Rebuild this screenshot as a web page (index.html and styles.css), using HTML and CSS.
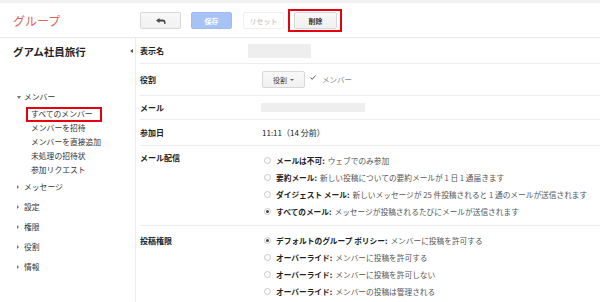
FILE: index.html
```html
<!DOCTYPE html>
<html lang="ja">
<head>
<meta charset="utf-8">
<title>グループ</title>
<link rel="stylesheet" href="styles.css">
</head>
<body>
<div class="topstrip"></div>
<header class="header">
  <div class="brand">グループ</div>
  <div class="toolbar">
    <button class="btn btn-back" type="button" aria-label="戻る">
      <svg width="10" height="6" viewBox="0 0 10 6"><path d="M0 2.5 L3.5 0 V1.6 H6.5 Q9.5 1.6 9.5 4.6 V6 H8.2 V4.8 Q8.2 3.4 6.5 3.4 H3.5 V5 Z" fill="#444"/></svg>
    </button>
    <button class="btn btn-save" type="button">保存</button>
    <button class="btn btn-reset" type="button">リセット</button>
    <button class="btn btn-delete marked" type="button">削除</button>
  </div>
</header>
<div class="layout">
  <aside class="sidebar">
    <div class="group-title">
      <span>グアム社員旅行</span>
      <span class="collapse"></span>
    </div>
    <ul class="nav">
      <li class="nav-top open"><span class="arrow down"></span>メンバー</li>
      <li class="nav-sub"><span class="marked">すべてのメンバー</span></li>
      <li class="nav-sub">メンバーを招待</li>
      <li class="nav-sub">メンバーを直接追加</li>
      <li class="nav-sub">未処理の招待状</li>
      <li class="nav-sub">参加リクエスト</li>
      <li class="nav-top"><span class="arrow right"></span>メッセージ</li>
      <li class="nav-top"><span class="arrow right"></span>設定</li>
      <li class="nav-top"><span class="arrow right"></span>権限</li>
      <li class="nav-top"><span class="arrow right"></span>役割</li>
      <li class="nav-top"><span class="arrow right"></span>情報</li>
    </ul>
  </aside>
  <main class="main">
    <div class="row row-name">
      <div class="label">表示名</div>
      <div class="value"><span class="redact redact-name"></span></div>
    </div>
    <div class="row row-role">
      <div class="label">役割</div>
      <div class="value">
        <button class="btn btn-role" type="button">役割 <span class="caret"></span></button>
        <svg class="check" width="6" height="5" viewBox="0 0 6 5"><path d="M0.5 2.6 L2.2 4.3 L5.5 0.6" fill="none" stroke="#555" stroke-width="1"/></svg>
        <span class="role-name">メンバー</span>
      </div>
    </div>
    <div class="row row-mail">
      <div class="label">メール</div>
      <div class="value"><span class="redact redact-mail"></span></div>
    </div>
    <div class="row row-joined">
      <div class="label">参加日</div>
      <div class="value">11:11（14 分前）</div>
    </div>
    <div class="row row-options">
      <div class="label">メール配信</div>
      <div class="value options">
        <div class="opt"><span class="radio"></span><b>メールは不可:</b> ウェブでのみ参加</div>
        <div class="opt"><span class="radio"></span><b>要約メール:</b> 新しい投稿についての要約メールが 1 日 1 通届きます</div>
        <div class="opt"><span class="radio"></span><b>ダイジェスト メール:</b> 新しいメッセージが 25 件投稿されると 1 通のメールが送信されます</div>
        <div class="opt"><span class="radio on"></span><b>すべてのメール:</b> メッセージが投稿されるたびにメールが送信されます</div>
      </div>
    </div>
    <div class="row row-options last">
      <div class="label">投稿権限</div>
      <div class="value options">
        <div class="opt"><span class="radio on"></span><b>デフォルトのグループ ポリシー:</b> メンバーに投稿を許可する</div>
        <div class="opt"><span class="radio"></span><b>オーバーライド:</b> メンバーに投稿を許可する</div>
        <div class="opt"><span class="radio"></span><b>オーバーライド:</b> メンバーに投稿を許可しない</div>
        <div class="opt"><span class="radio"></span><b>オーバーライド:</b> メンバーの投稿は管理される</div>
      </div>
    </div>
  </main>
</div>
</body>
</html>
```
FILE: styles.css
```css
* { box-sizing: border-box; }
html, body { margin: 0; padding: 0; }
body {
  width: 600px;
  height: 302px;
  overflow: hidden;
  background: #fff;
  color: #222;
  font-family: "Liberation Sans", "Noto Sans CJK JP", sans-serif;
  font-size: 8px;
}
.topstrip { height: 3px; background: #f1f1f1; }
.header {
  height: 35px;
  border-bottom: 1px solid #e8e8e8;
  display: flex;
  align-items: center;
}
.brand {
  width: 140px;
  padding-left: 13px;
  font-size: 12px;
  color: #e6615a;
  font-family: "Noto Sans CJK JP", sans-serif;
}
.toolbar { display: flex; align-items: center; gap: 10px; padding-top: 1px; }
.btn {
  height: 17px;
  width: 41px;
  padding: 0;
  border: 1px solid #d8d8d8;
  border-radius: 2px;
  background: linear-gradient(#f8f8f8, #f1f1f1);
  font-family: "Noto Sans CJK JP", sans-serif;
  font-size: 7px;
  font-weight: bold;
  color: #333;
  display: inline-flex;
  align-items: center;
  justify-content: center;
  position: relative;
}
.btn-save { background: #a7c3f6; border-color: #a0bcf0; color: #fff; }
.btn-reset { background: #fff; border-color: #efefef; color: #d0d0d0; margin-left: 1px; }
.btn-delete { width: 43px; }
.marked { position: relative; }
.btn-delete.marked::after {
  content: "";
  position: absolute;
  left: -7px; right: -6px; top: -4px; bottom: -4px;
  border: 2px solid #e8000f;
}
.layout { display: flex; }
.sidebar {
  width: 136px;
  border-right: 1px solid #ececec;
  height: 264px;
  flex: none;
}
.group-title {
  height: 26px;
  display: flex;
  align-items: center;
  justify-content: space-between;
  padding-left: 13px;
  padding-right: 2px;
  font-family: "Noto Sans CJK JP", sans-serif;
  font-size: 10.5px;
  font-weight: bold;
  color: #222;
}
.collapse {
  width: 0; height: 0;
  border-top: 2px solid transparent;
  border-bottom: 2px solid transparent;
  border-right: 3px solid #555;
}
.nav { list-style: none; margin: 23px 0 0; padding: 0; color: #333; font-family: "Noto Sans CJK JP", sans-serif; font-size: 7.8px; }
.nav-top { height: 20px; line-height: 20px; padding-left: 17px; display: flex; align-items: center; }
.nav-sub { height: 14px; line-height: 14px; padding-left: 31px; }
.arrow { width: 0; height: 0; margin-right: 4px; }
.arrow.down { border-left: 2px solid transparent; border-right: 2px solid transparent; border-top: 3px solid #777; margin-right: 3px; }
.arrow.right { border-top: 2px solid transparent; border-bottom: 2px solid transparent; border-left: 2px solid #777; margin-right: 5px; }
.nav-sub .marked { display: inline-block; }
.nav-sub .marked::after {
  content: "";
  position: absolute;
  left: -5px; right: -9px; top: 0px; bottom: -1px;
  border: 2px solid #e8000f;
}
.main { flex: 1; padding-left: 4px; }
.row {
  display: grid;
  grid-template-columns: 122px 1fr;
  align-items: center;
  border-bottom: 1px solid #ececec;
  font-family: "Noto Sans CJK JP", sans-serif;
}
.label { font-weight: bold; color: #222; }
.row-name { height: 26px; }
.row-role { height: 32px; }
.row-mail { height: 24px; }
.row-joined { height: 26px; }
.row-options { height: 80px; align-items: start; }
.row-options .label { padding-top: 3px; line-height: 17px; }
.row-options.last { border-bottom: none; }
.row-options.last .label { padding-top: 6px; }
.value { display: flex; align-items: center; }
.redact { display: block; background: #eeeeee; }
.redact-name { width: 63px; height: 14px; margin-left: -14px; }
.redact-mail { width: 104px; height: 9px; margin-left: -1px; }
.btn-role { width: 43px; font-weight: normal; color: #444; gap: 3px; }
.caret { width: 0; height: 0; border-left: 2px solid transparent; border-right: 2px solid transparent; border-top: 2px solid #666; }
.check { margin-left: 5px; margin-top: -4px; }
.role-name { margin-left: 6px; color: #888; font-size: 7.5px; }
.options { display: block; padding-top: 6px; font-size: 7.7px; }
.opt { height: 17px; display: flex; align-items: center; color: #555; white-space: nowrap; }
.opt b { color: #222; margin-right: 3px; }
.radio {
  width: 7px; height: 7px;
  border: 1px solid #c8c8c8;
  border-radius: 50%;
  margin: 0 5px 0 2px;
  display: inline-flex;
  align-items: center;
  justify-content: center;
  flex: none;
}
.radio.on::after { content: ""; width: 3px; height: 3px; border-radius: 50%; background: #444; }
```
